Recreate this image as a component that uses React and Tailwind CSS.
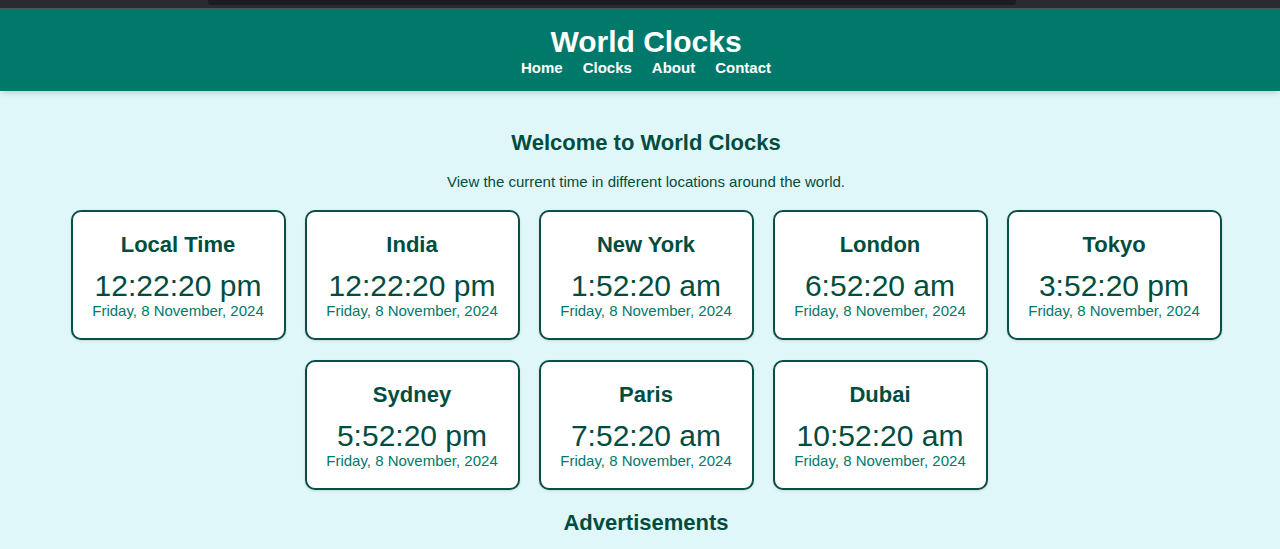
import React from 'react';

const clocks = [
    { city: 'Local Time', time: '12:22:20 pm' },
    { city: 'India', time: '12:22:20 pm' },
    { city: 'New York', time: '1:52:20 am' },
    { city: 'London', time: '6:52:20 am' },
    { city: 'Tokyo', time: '3:52:20 pm' },
    { city: 'Sydney', time: '5:52:20 pm' },
    { city: 'Paris', time: '7:52:20 am' },
    { city: 'Dubai', time: '10:52:20 am' },
];

const DATE = 'Friday, 8 November, 2024';

function ClockCard({ city, time }) {
    return (
        <div className="w-[215px] h-[130px] bg-white border-2 border-[#0b4f44] rounded-[10px] shadow-sm flex flex-col items-center pt-[20px]">
            <h3 className="text-[22px] leading-[26px] font-bold text-[#004d40]">{city}</h3>
            <div className="mt-[12px] text-[30px] leading-[32px] text-[#004d40]">{time}</div>
            <div className="text-[15px] leading-[18px] text-[#00796b]">{DATE}</div>
        </div>
    );
}

export default function App() {
    return (
        <div className="min-h-[549px] bg-[#e0f7fa] font-['Liberation_Sans',Arial,sans-serif]">
            {/* browser chrome strip */}
            <div className="h-[9px] bg-[#2b2a33] border-b border-[#4a5a5a]">
                <div className="ml-[208px] w-[808px] h-[5px] bg-[#1c1b22] rounded-b-[3px]"></div>
            </div>

            {/* Header */}
            <header className="bg-[#00796b] text-white shadow-md pl-3 pt-[16px] pb-[14px] flex flex-col items-center">
                <h1 className="text-[30px] leading-[34px] font-bold">World Clocks</h1>
                <nav className="flex gap-5 text-[15px] leading-[18px] font-bold">
                    <a>Home</a>
                    <a>Clocks</a>
                    <a>About</a>
                    <a>Contact</a>
                </nav>
            </header>

            {/* Main */}
            <main className="pl-3 flex flex-col items-center text-[#004d40]">
                <h2 className="mt-[39px] text-[22px] leading-[26px] font-bold">Welcome to World Clocks</h2>
                <p className="mt-[17px] text-[15px] leading-[18px]">View the current time in different locations around the world.</p>

                <div className="mt-[19px] w-[1160px] flex flex-wrap justify-center gap-x-[19px] gap-y-[20px]">
                    {clocks.map(c => (
                        <ClockCard key={c.city} city={c.city} time={c.time} />
                    ))}
                </div>

                <h2 className="mt-[20px] text-[22px] leading-[26px] font-bold">Advertisements</h2>
            </main>
        </div>
    );
}
